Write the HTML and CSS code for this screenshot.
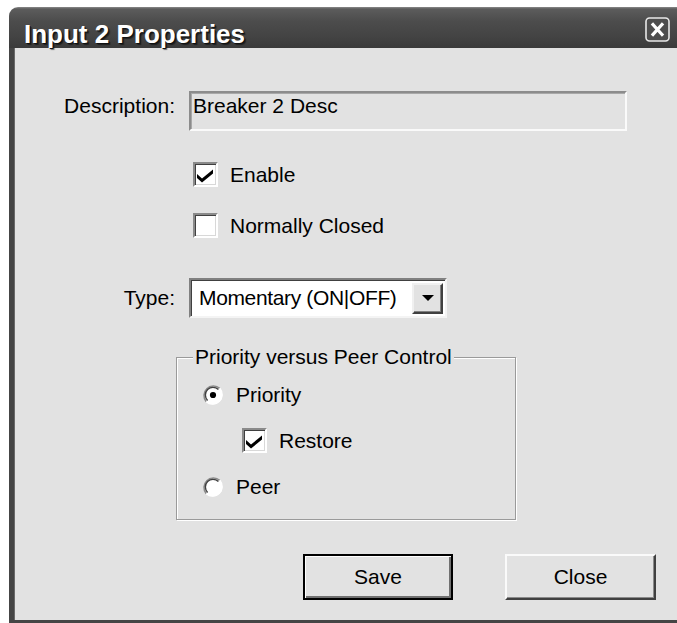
FILE: index.html
```html
<!DOCTYPE html>
<html lang="en">
<head>
<meta charset="utf-8">
<title>Input 2 Properties</title>
<link rel="stylesheet" href="styles.css">
</head>
<body>
<div class="dialog">
  <div class="titlebar">
    <span class="title">Input 2 Properties</span>
    <span class="close-box">
      <svg width="25" height="25" viewBox="0 0 25 25">
        <rect x="1" y="1" width="23" height="23" rx="3.5" fill="#4e4e4e" stroke="#e8e8e8" stroke-width="1.6"/>
        <path d="M8 7.5 L17 17.5 M17 7.5 L8 17.5" stroke="#fff" stroke-width="3.2" stroke-linecap="square"/>
      </svg>
    </span>
  </div>

  <div class="client">
    <div class="field-row desc-row">
      <span class="field-label">Description:</span>
      <div class="textbox">Breaker 2 Desc</div>
    </div>

    <div class="check-row enable-row">
      <span class="checkbox">
        <svg width="21" height="21" viewBox="0 0 21 21"><polygon points="2,10 2,14 7,18.5 18,9.5 18,5.5 7,14.5" fill="#000"/></svg>
      </span>
      <span class="check-text">Enable</span>
    </div>

    <div class="check-row nc-row">
      <span class="checkbox"></span>
      <span class="check-text">Normally Closed</span>
    </div>

    <div class="field-row type-row">
      <span class="field-label">Type:</span>
      <div class="combo">
        <span class="combo-text">Momentary (ON|OFF)</span>
        <span class="combo-btn">
          <svg width="12" height="6" viewBox="0 0 12 6"><polygon points="0,0 12,0 6,6" fill="#000"/></svg>
        </span>
      </div>
    </div>

    <fieldset class="group">
      <legend>Priority versus Peer Control</legend>

      <div class="radio-row priority-row">
        <svg class="radio" width="22" height="22" viewBox="0 0 22 22">
          <circle cx="11" cy="11" r="9.5" fill="#fff"/>
          <path d="M4.3 17.7 A9.5 9.5 0 0 1 17.7 4.3" fill="none" stroke="#8a8a8a" stroke-width="1.6"/>
          <path d="M17.7 4.3 A9.5 9.5 0 0 1 4.3 17.7" fill="none" stroke="#fff" stroke-width="1.6"/>
          <path d="M5.6 16.4 A7.6 7.6 0 0 1 16.4 5.6" fill="none" stroke="#404040" stroke-width="1.4"/>
          <circle cx="11" cy="11" r="3.1" fill="#000"/>
        </svg>
        <span class="check-text">Priority</span>
      </div>

      <div class="check-row restore-row">
        <span class="checkbox">
          <svg width="21" height="21" viewBox="0 0 21 21"><polygon points="2,10 2,14 7,18.5 18,9.5 18,5.5 7,14.5" fill="#000"/></svg>
        </span>
        <span class="check-text">Restore</span>
      </div>

      <div class="radio-row peer-row">
        <svg class="radio" width="22" height="22" viewBox="0 0 22 22">
          <circle cx="11" cy="11" r="9.5" fill="#fff"/>
          <path d="M4.3 17.7 A9.5 9.5 0 0 1 17.7 4.3" fill="none" stroke="#8a8a8a" stroke-width="1.6"/>
          <path d="M17.7 4.3 A9.5 9.5 0 0 1 4.3 17.7" fill="none" stroke="#fff" stroke-width="1.6"/>
          <path d="M5.6 16.4 A7.6 7.6 0 0 1 16.4 5.6" fill="none" stroke="#404040" stroke-width="1.4"/>
        </svg>
        <span class="check-text">Peer</span>
      </div>
    </fieldset>

    <div class="buttons">
      <button class="btn btn-default" type="button">Save</button>
      <button class="btn btn-close" type="button">Close</button>
    </div>
  </div>
</div>
</body>
</html>
```

FILE: styles.css
```css
html, body {
  margin: 0;
  padding: 0;
  overflow: hidden;
  background: #fff;
}

body {
  font-family: "Liberation Sans", Arial, sans-serif;
  font-size: 21px;
  color: #000;
}

/* window */
.dialog {
  margin: 7px 0 0 9px;
  width: 690px;
}

.titlebar {
  height: 41px;
  box-sizing: border-box;
  display: flex;
  align-items: flex-start;
  justify-content: space-between;
  border-radius: 9px 0 0 0;
  background: linear-gradient(#8a8a8a 0, #5c5c5c 2px, #4c4c4c 35%, #444 70%, #3a3a3a 100%);
}

.title {
  padding: 13px 0 0 15px;
  font-size: 26px;
  line-height: 28px;
  font-weight: bold;
  letter-spacing: 0;
  color: #fff;
  text-shadow: 1px 1px 0 #111, 2px 2px 1px rgba(0, 0, 0, 0.5);
}

.close-box {
  margin: 10px 29px 0 0;
  width: 25px;
  height: 25px;
}

.close-box svg {
  display: block;
}

.client {
  height: 575px;
  box-sizing: border-box;
  background: #e2e2e2;
  border-left: 5px solid #454545;
  border-bottom: 3px solid #454545;
  box-shadow: inset 1px 0 0 #6a6a6a;
  padding-top: 43px;
}

/* label + control rows */
.field-row {
  display: flex;
}

.field-label {
  width: 161px;
  margin-right: 14px;
  text-align: right;
  line-height: 24px;
}

.desc-row {
  align-items: flex-start;
}

.desc-row .field-label {
  padding-top: 3px;
}

.textbox {
  width: 438px;
  height: 40px;
  box-sizing: border-box;
  border: 2px solid;
  border-color: #8c8c8c #fafafa #fafafa #8c8c8c;
  box-shadow: inset 1px 1px 0 #a8a8a8;
  padding: 1px 2px;
  line-height: 24px;
  background: #e2e2e2;
}

/* checkboxes */
.check-row,
.radio-row {
  display: flex;
  align-items: center;
}

.check-row {
  height: 25px;
}

.radio-row {
  height: 24px;
}

.enable-row {
  margin: 31px 0 0 179px;
}

.nc-row {
  margin: 26px 0 0 179px;
}

.checkbox {
  width: 25px;
  height: 25px;
  box-sizing: border-box;
  border: 2px solid;
  border-color: #8a8a8a #fff #fff #8a8a8a;
  box-shadow: inset 1px 1px 0 #404040, inset -1px -1px 0 #d8d8d8;
  background: #fff;
  flex: none;
}

.checkbox svg {
  display: block;
}

.check-text {
  margin-left: 12px;
  line-height: 24px;
}

/* combo box */
.type-row {
  margin-top: 40px;
  align-items: center;
}

.combo {
  width: 258px;
  height: 40px;
  box-sizing: border-box;
  border: 2px solid;
  border-color: #808080 #f4f4f4 #f4f4f4 #808080;
  box-shadow: inset 1px 1px 0 #404040;
  background: #fff;
  display: flex;
  align-items: center;
}

.combo-text {
  padding-left: 8px;
  letter-spacing: -0.35px;
  line-height: 24px;
  white-space: nowrap;
}

.combo-btn {
  margin: 0 2px 0 auto;
  width: 31px;
  height: 31px;
  box-sizing: border-box;
  border: 2px solid;
  border-color: #f0f0f0 #404040 #404040 #f0f0f0;
  box-shadow: inset -1px -1px 0 #808080;
  background: #e2e2e2;
  display: flex;
  align-items: center;
  justify-content: center;
  flex: none;
}

.combo-btn svg {
  display: block;
}

/* group box */
.group {
  margin: 27px 0 0 162px;
  padding: 14px 0 0 0;
  width: 340px;
  height: 175px;
  box-sizing: border-box;
  border: 1px solid #9a9a9a;
  box-shadow: inset 1px 1px 0 #fff, 1px 1px 0 #fff;
  min-inline-size: 0;
}

.group legend {
  margin-left: 16px;
  padding: 0 2px;
  line-height: 24px;
  background: #e2e2e2;
}

.radio {
  display: block;
  flex: none;
}

.priority-row {
  margin-left: 25px;
}

.priority-row .check-text,
.peer-row .check-text {
  margin-left: 12px;
}

.restore-row {
  margin: 21px 0 0 65px;
}

.peer-row {
  margin: 22px 0 0 25px;
}

/* push buttons */
.buttons {
  display: flex;
  margin: 34px 0 0 289px;
}

.btn {
  height: 46px;
  box-sizing: border-box;
  font-family: inherit;
  font-size: 21px;
  color: #000;
  background: #e2e2e2;
  padding: 0;
  margin: 0;
  border: 2px solid;
  cursor: default;
}

.btn-default {
  width: 150px;
  border-color: #000;
  box-shadow: inset 1px 1px 0 #fff, inset -2px -2px 0 #707070;
}

.btn-close {
  width: 151px;
  margin-left: 52px;
  border-color: #fafafa #404040 #404040 #fafafa;
  box-shadow: inset -1px -1px 0 #8a8a8a;
}
```
